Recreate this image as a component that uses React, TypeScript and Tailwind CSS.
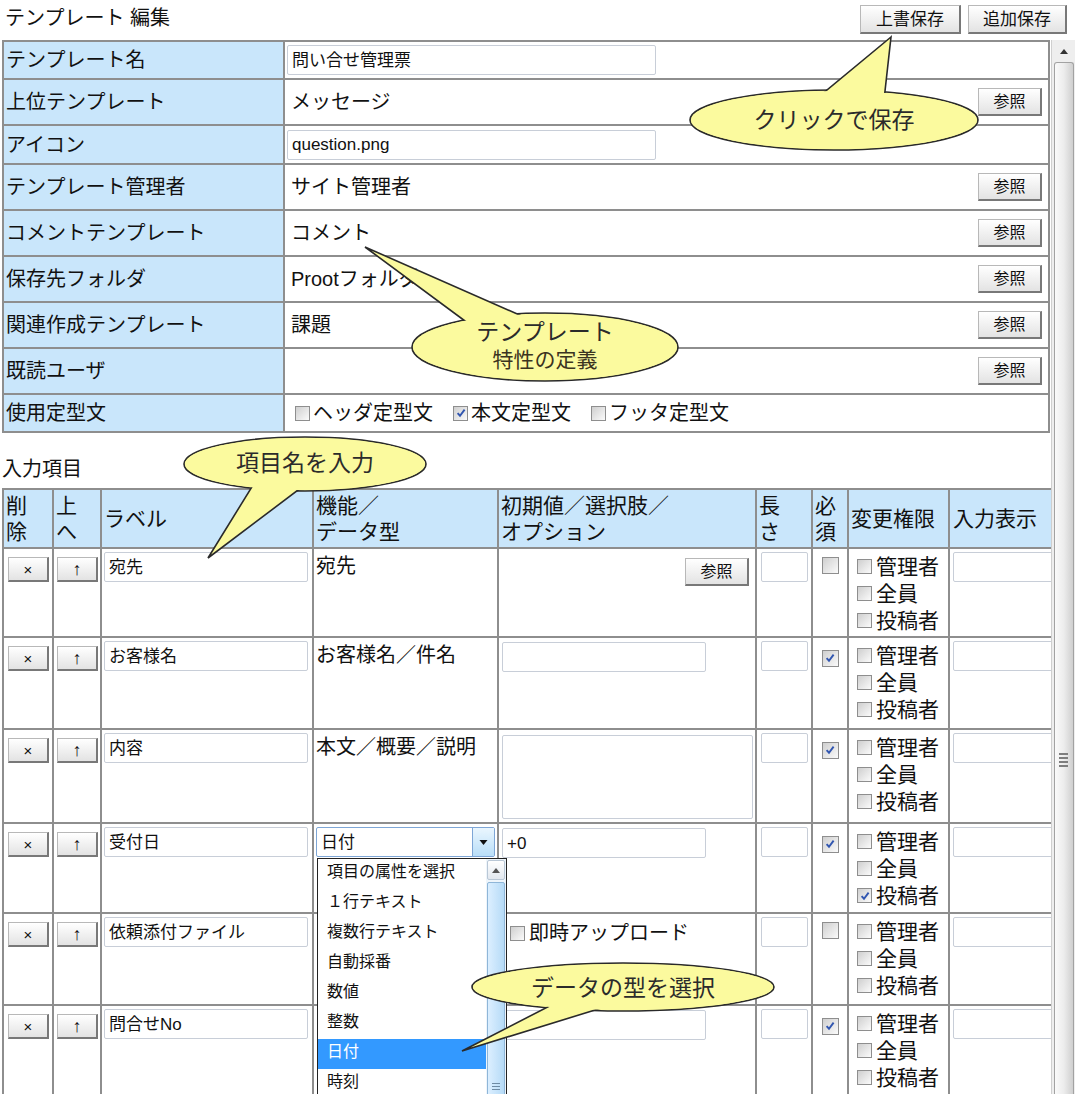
import React from "react";

const FONT = "font-['Liberation_Sans','Noto_Sans_CJK_JP','Noto_Sans_CJK_SC',sans-serif]";

function Btn({ children, className = "" }: { children: React.ReactNode; className?: string }) {
  return (
    <button
      type="button"
      className={`inline-flex items-center justify-center border border-[#b8b8b8] border-r-2 border-b-2 border-r-[#787878] border-b-[#787878] bg-gradient-to-b from-white to-[#e3e3e3] leading-none text-[#111] ${className}`}
    >
      {children}
    </button>
  );
}

function Check({ on = false, className = "" }: { on?: boolean; className?: string }) {
  return (
    <span
      className={`inline-flex h-[15px] w-[15px] shrink-0 items-center justify-center border border-[#8e8e8e] bg-gradient-to-br from-[#cfcfcf] to-[#fbfbfb] ${className}`}
    >
      {on ? (
        <svg viewBox="0 0 10 10" className="h-[10px] w-[10px]">
          <path d="M1.6 5.1 L4 7.7 L8.6 1.6" fill="none" stroke="#3156b0" strokeWidth="1.9" />
        </svg>
      ) : null}
    </span>
  );
}

function Field({ value = "", className = "" }: { value?: string; className?: string }) {
  return (
    <div className={`flex items-center rounded-[2px] border border-[#c8ced8] bg-white px-[4px] text-[17px] leading-none text-[#111] ${className}`}>
      {value}
    </div>
  );
}

function RefBtn() {
  return <Btn className="h-[28px] w-[64px] text-[16px]">参照</Btn>;
}

type TopRow = { label: string; h: number; text?: string; field?: string; ref?: boolean; checks?: boolean };

const topRows: TopRow[] = [
  { label: "テンプレート名", h: 38, field: "問い合せ管理票" },
  { label: "上位テンプレート", h: 46, text: "メッセージ", ref: true },
  { label: "アイコン", h: 39, field: "question.png" },
  { label: "テンプレート管理者", h: 46, text: "サイト管理者", ref: true },
  { label: "コメントテンプレート", h: 46, text: "コメント", ref: true },
  { label: "保存先フォルダ", h: 46, text: "Prootフォルダ", ref: true },
  { label: "関連作成テンプレート", h: 46, text: "課題", ref: true },
  { label: "既読ユーザ", h: 46, text: "", ref: true },
  { label: "使用定型文", h: 38, checks: true },
];

type Item = {
  label: string;
  h: number;
  type: "text" | "select" | "none";
  typeText?: string;
  init: "ref" | "input" | "textarea" | "upload";
  initValue?: string;
  req: boolean;
  perms: [boolean, boolean, boolean];
};

const items: Item[] = [
  { label: "宛先", h: 89, type: "text", typeText: "宛先", init: "ref", req: false, perms: [false, false, false] },
  { label: "お客様名", h: 92, type: "text", typeText: "お客様名／件名", init: "input", req: true, perms: [false, false, false] },
  { label: "内容", h: 94, type: "text", typeText: "本文／概要／説明", init: "textarea", req: true, perms: [false, false, false] },
  { label: "受付日", h: 90, type: "select", init: "input", initValue: "+0", req: true, perms: [false, false, true] },
  { label: "依頼添付ファイル", h: 92, type: "none", init: "upload", req: false, perms: [false, false, false] },
  { label: "問合せNo", h: 92, type: "none", init: "input", req: true, perms: [false, false, false] },
];

const options = ["項目の属性を選択", "１行テキスト", "複数行テキスト", "自動採番", "数値", "整数", "日付", "時刻", "日時"];

const cell = "border-2 border-[#8e8e8e] align-top";

function Dropdown() {
  return (
    <div className="absolute left-[3px] top-[34px] z-10 flex h-[250px] w-[190px] border border-[#222] bg-white">
      <div className="flex-1">
        {options.map((o) => (
          <div
            key={o}
            className={`flex h-[30px] items-center pb-[4px] pl-[9px] text-[16px] leading-none ${o === "日付" ? "bg-[#3399ff] text-white" : "text-[#111]"}`}
          >
            {o}
          </div>
        ))}
      </div>
      <div className="flex w-[20px] flex-col items-center gap-[2px] bg-[#eef5fb] pt-[1px]">
        <div className="flex h-[20px] w-[18px] items-center justify-center rounded-[2px] border border-[#b9c7d6] bg-gradient-to-b from-white to-[#e2e8ef]">
          <svg viewBox="0 0 8 5" className="h-[5px] w-[8px]">
            <path d="M0 5 L4 0 L8 5 Z" fill="#555" />
          </svg>
        </div>
        <div className="flex w-[18px] flex-1 flex-col items-center rounded-[2px] border border-[#8fb6d8] bg-gradient-to-r from-[#dcefff] to-[#b6dbf7] pt-[200px]">
          <div className="flex flex-col gap-[2px]">
            <span className="block h-px w-[8px] bg-[#6e8ba4]" />
            <span className="block h-px w-[8px] bg-[#6e8ba4]" />
            <span className="block h-px w-[8px] bg-[#6e8ba4]" />
          </div>
        </div>
      </div>
    </div>
  );
}

function ItemRow({ it }: { it: Item }) {
  return (
    <tr style={{ height: it.h }}>
      <td className={`${cell} pl-[4px] pt-[8px]`}>
        <Btn className="h-[25px] w-[41px] text-[15px]">×</Btn>
      </td>
      <td className={`${cell} pl-[3px] pt-[8px]`}>
        <Btn className="h-[25px] w-[41px] text-[18px]">↑</Btn>
      </td>
      <td className={`${cell} pl-[2px] pt-[3px]`}>
        <Field value={it.label} className="h-[30px] w-[204px]" />
      </td>
      <td className={`${cell} relative pl-[2px] pt-[3px]`}>
        {it.type === "text" ? <div className="pt-[1px] text-[20px] leading-[26px]">{it.typeText}</div> : null}
        {it.type === "select" ? (
          <>
            <div className="flex h-[30px] w-[179px] items-center rounded-[2px] border border-[#7ea6d6] bg-white pl-[4px] text-[17px] leading-none">
              <span className="flex-1">日付</span>
              <span className="flex h-[28px] w-[22px] items-center justify-center border-l border-[#7ea6d6] bg-gradient-to-b from-[#eaf6fe] to-[#b9def8]">
                <svg viewBox="0 0 8 5" className="h-[5px] w-[9px]">
                  <path d="M0 0 L8 0 L4 5 Z" fill="#111" />
                </svg>
              </span>
            </div>
            <Dropdown />
          </>
        ) : null}
      </td>
      <td className={`${cell} pl-[3px] pt-[4px]`}>
        {it.init === "ref" ? (
          <div className="flex justify-end pr-[6px] pt-[5px]">
            <RefBtn />
          </div>
        ) : null}
        {it.init === "input" ? <Field value={it.initValue} className="h-[30px] w-[204px]" /> : null}
        {it.init === "textarea" ? <Field className="mt-[1px] h-[84px] w-[251px]" /> : null}
        {it.init === "upload" ? (
          <div className="flex items-center gap-[4px] pl-[8px] pt-[2px] text-[20px] leading-[26px]">
            <Check />
            <span>即時アップロード</span>
          </div>
        ) : null}
      </td>
      <td className={`${cell} pl-[4px] pt-[3px]`}>
        <Field className="h-[30px] w-[47px]" />
      </td>
      <td className={`${cell} pt-[8px] text-center`}>
        <Check on={it.req} className="h-[17px] w-[17px]" />
      </td>
      <td className={`${cell} pl-[8px] pt-[4px]`}>
        {["管理者", "全員", "投稿者"].map((p, i) => (
          <div key={p} className="flex h-[27px] items-center gap-[4px] text-[21px] leading-none">
            <Check on={it.perms[i]} />
            <span>{p}</span>
          </div>
        ))}
      </td>
      <td className={`${cell} pl-[3px] pt-[3px]`}>
        <Field className="h-[30px] w-[200px]" />
      </td>
    </tr>
  );
}

function Balloon({ cx, cy, rx, ry, tail }: { cx: number; cy: number; rx: number; ry: number; tail: string }) {
  const fill = "#fbfa9e";
  const stroke = "#2a2a2a";
  return (
    <g>
      <ellipse cx={cx} cy={cy} rx={rx} ry={ry} fill={fill} stroke={stroke} strokeWidth="1.6" />
      <polygon points={tail} fill={fill} stroke={stroke} strokeWidth="1.6" strokeLinejoin="miter" />
      <ellipse cx={cx} cy={cy} rx={rx - 1} ry={ry - 1} fill={fill} />
    </g>
  );
}

function Scrollbar() {
  return (
    <div className="mr-[2px] flex w-[24px] flex-col items-center border-l border-[#cfcfcf] bg-[#eeeeee]">
      <div className="flex h-[22px] w-full items-center justify-center">
        <svg viewBox="0 0 8 5" className="h-[5px] w-[8px]">
          <path d="M0 5 L4 0 L8 5 Z" fill="#333" />
        </svg>
      </div>
      <div className="flex w-[20px] flex-1 flex-col items-center rounded-t-[3px] border border-b-0 border-[#a2a2a2] bg-gradient-to-r from-[#fafafa] via-[#ececec] to-[#cfcfcf] pt-[690px]">
        <div className="flex flex-col gap-[2px]">
          <span className="block h-[2px] w-[9px] bg-[#7d7d7d]" />
          <span className="block h-[2px] w-[9px] bg-[#7d7d7d]" />
          <span className="block h-[2px] w-[9px] bg-[#7d7d7d]" />
          <span className="block h-[2px] w-[9px] bg-[#7d7d7d]" />
        </div>
      </div>
    </div>
  );
}

export default function App() {
  return (
    <div className={`relative h-[1094px] w-[1077px] overflow-hidden bg-white text-[#111] ${FONT}`}>
      <header className="flex h-[40px] items-start justify-between pl-[5px] pr-[10px]">
        <h1 className="mt-[6px] text-[20px] leading-[24px]">テンプレート 編集</h1>
        <div className="mt-[5px] flex gap-[7px]">
          <Btn className="h-[29px] w-[101px] text-[17px]">上書保存</Btn>
          <Btn className="h-[29px] w-[99px] text-[17px]">追加保存</Btn>
        </div>
      </header>

      <div className="flex h-[1054px]">
        <div className="w-[1051px] overflow-hidden pl-[2px]">
          <table className="w-[1048px] table-fixed border-collapse">
            <colgroup>
              <col className="w-[281px]" />
              <col />
            </colgroup>
            <tbody>
              {topRows.map((r) => (
                <tr key={r.label} style={{ height: r.h }}>
                  <td className="border-2 border-[#8e8e8e] bg-[#c9e6fb] pl-[2px] align-middle text-[20px] leading-none">{r.label}</td>
                  <td className="border-2 border-[#8e8e8e] pl-[2px] pr-[6px] align-middle text-[20px] leading-none">
                    {r.field !== undefined ? <Field value={r.field} className="h-[30px] w-[369px]" /> : null}
                    {r.text !== undefined ? (
                      <div className="flex items-center justify-between">
                        <span className="pl-[4px]">{r.text}</span>
                        {r.ref ? <RefBtn /> : null}
                      </div>
                    ) : null}
                    {r.checks ? (
                      <div className="flex items-center pl-[8px] text-[20px]">
                        <Check />
                        <span className="ml-[3px]">ヘッダ定型文</span>
                        <Check on className="ml-[20px]" />
                        <span className="ml-[3px]">本文定型文</span>
                        <Check className="ml-[20px]" />
                        <span className="ml-[3px]">フッタ定型文</span>
                      </div>
                    ) : null}
                  </td>
                </tr>
              ))}
            </tbody>
          </table>

          <div className="mb-[6px] mt-[23px] text-[20px] leading-[26px]">入力項目</div>

          <table className="w-[1160px] table-fixed border-collapse">
            <colgroup>
              <col className="w-[50px]" />
              <col className="w-[48px]" />
              <col className="w-[212px]" />
              <col className="w-[185px]" />
              <col className="w-[258px]" />
              <col className="w-[56px]" />
              <col className="w-[36px]" />
              <col className="w-[101px]" />
              <col className="w-[214px]" />
            </colgroup>
            <thead>
              <tr className="h-[59px] bg-[#c9e6fb] text-left text-[21px] font-normal leading-[26px]">
                <th className="border-2 border-[#8e8e8e] pl-[2px] align-middle font-normal">削<br />除</th>
                <th className="border-2 border-[#8e8e8e] pl-[2px] align-middle font-normal">上<br />へ</th>
                <th className="border-2 border-[#8e8e8e] pl-[2px] align-middle font-normal">ラベル</th>
                <th className="border-2 border-[#8e8e8e] pl-[2px] align-middle font-normal">機能／<br />データ型</th>
                <th className="border-2 border-[#8e8e8e] pl-[2px] align-middle font-normal">初期値／選択肢／<br />オプション</th>
                <th className="border-2 border-[#8e8e8e] pl-[2px] align-middle font-normal">長<br />さ</th>
                <th className="border-2 border-[#8e8e8e] pl-[2px] align-middle font-normal">必<br />須</th>
                <th className="border-2 border-[#8e8e8e] pl-[2px] align-middle font-normal">変更権限</th>
                <th className="border-2 border-[#8e8e8e] pl-[3px] align-middle font-normal">入力表示</th>
              </tr>
            </thead>
            <tbody>
              {items.map((it) => (
                <ItemRow key={it.label} it={it} />
              ))}
            </tbody>
          </table>
        </div>
        <Scrollbar />
      </div>

      <svg className="pointer-events-none absolute inset-0 z-20" width="1077" height="1094" viewBox="0 0 1077 1094">
        <Balloon cx={834} cy={120} rx={144} ry={30} tail="891,37 815,100 884,100" />
        <Balloon cx={545} cy={347} rx={133} ry={34} tail="365,247 533,321 488,338" />
        <Balloon cx={305} cy={464} rx={121} ry={27} tail="208,558 258,477 314,478" />
        <Balloon cx={623} cy={987} rx={151} ry={24} tail="462,1051 569,996 634,998" />
      </svg>

      <div className="pointer-events-none absolute left-[690px] top-[105px] z-30 w-[288px] text-center text-[23px] leading-[30px] text-[#2b2b2b]">クリックで保存</div>
      <div className="pointer-events-none absolute left-[412px] top-[318px] z-30 w-[266px] text-center text-[#2b2b2b]">
        <div className="text-[23px] leading-[28px]">テンプレート</div>
        <div className="text-[21px] leading-[28px] text-[#3b3320]">特性の定義</div>
      </div>
      <div className="pointer-events-none absolute left-[184px] top-[448px] z-30 w-[242px] text-center text-[23px] leading-[30px] text-[#2b2b2b]">項目名を入力</div>
      <div className="pointer-events-none absolute left-[472px] top-[973px] z-30 w-[302px] text-center text-[23px] leading-[30px] text-[#2b2b2b]">データの型を選択</div>
    </div>
  );
}
